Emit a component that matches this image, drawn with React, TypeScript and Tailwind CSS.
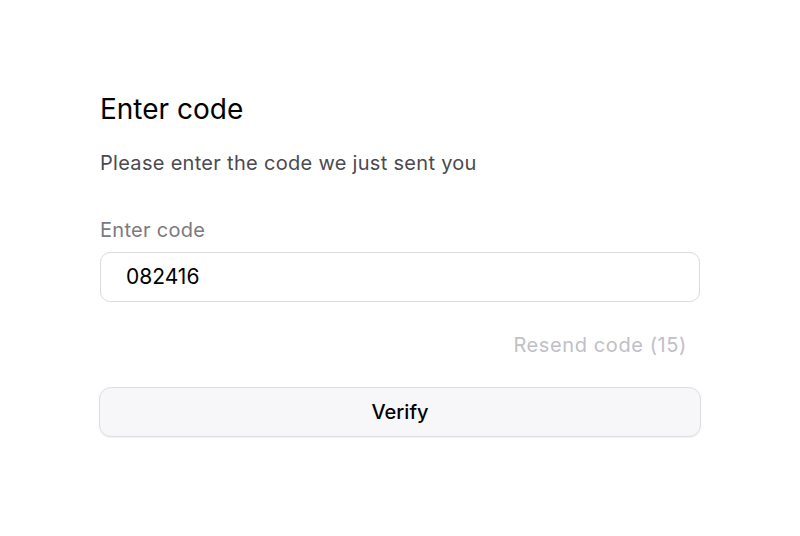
export default function App() {
  return (
    <main
      className="w-[800px] h-[536px] bg-white flex justify-center"
      style={{ fontFamily: "Inter, 'Noto Sans', sans-serif" }}
    >
      <div className="w-[600px] pt-[92px]">
        <h1 className="text-[28px] leading-[34px] text-black">Enter code</h1>
        <p className="mt-[25px] text-[20px] leading-[24px] tracking-[0.3px] text-[#4a4a50]">
          Please enter the code we just sent you
        </p>

        <label className="block mt-[43px] text-[20px] leading-[24px] tracking-[0.3px] text-[#7a7a80]">
          Enter code
        </label>
        <div className="mt-[10px] h-[50px] rounded-[10px] border border-[#dcdce0] flex items-center px-[25px]">
          <span className="text-[21px] text-black">082416</span>
        </div>

        <div className="mt-[31px] flex justify-end pr-[13px]">
          <span className="text-[20px] leading-[24px] tracking-[0.6px] text-[#c0c0c6]">
            Resend code (15)
          </span>
        </div>

        <button className="mt-[30px] -mx-[1px] w-[602px] h-[50px] rounded-[12px] border border-[#dedee2] bg-[#f7f7fa] shadow-[0_1px_2px_rgba(0,0,0,0.06)] flex items-center justify-center text-[20px] font-[450] text-black">
          Verify
        </button>
      </div>
    </main>
  );
}
